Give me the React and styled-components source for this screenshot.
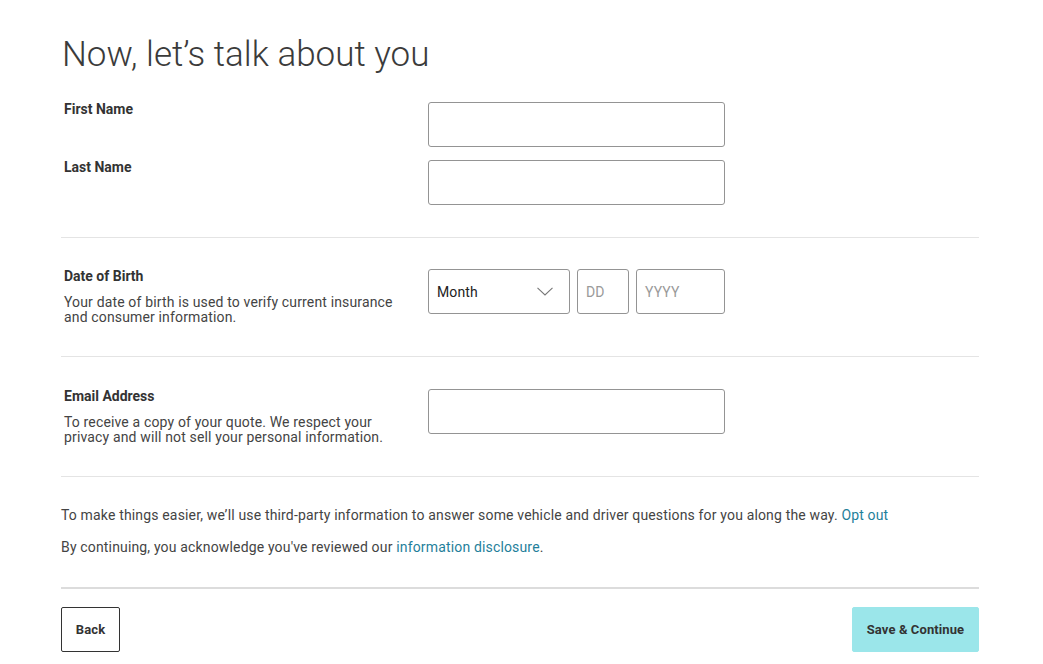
import React from 'react';
import styled, { createGlobalStyle } from 'styled-components';

const Global = createGlobalStyle`
  body {
    margin: 0;
    background: #fff;
    font-family: Roboto, "Liberation Sans", Arial, sans-serif;
    color: #333;
  }
`;

const Page = styled.div`
  width: 918px;
  margin-left: 61px;
  padding-top: 33px;
`;

const Title = styled.h1`
  margin: 0 0 25px 1px;
  font-weight: 300;
  font-size: 35px;
  line-height: 44px;
  color: #3b3b3b;
`;

const Section = styled.div`
  display: flex;
  flex-direction: column;
  gap: 13px;
  padding: ${(p) => p.$pad || '31px 0'};
  border-bottom: 1px solid #e4e4e4;
`;

const Row = styled.div`
  display: flex;
  align-items: flex-start;
`;

const LabelCol = styled.div`
  width: 364px;
  padding-left: 3px;
`;

const Label = styled.div`
  font-size: 14px;
  font-weight: 700;
  line-height: 14px;
  color: #333;
`;

const Help = styled.div`
  margin-top: 12px;
  font-size: 14px;
  line-height: 15px;
  letter-spacing: 0.15px;
  color: #444;
  max-width: 340px;
`;

const Field = styled.div`
  width: ${(p) => p.$w || 297}px;
  height: 45px;
  box-sizing: border-box;
  border: 1px solid #949494;
  border-radius: 3px;
  display: flex;
  align-items: center;
  padding: 0 8px;
  font-size: 14px;
  letter-spacing: 0.1px;
  color: ${(p) => (p.$placeholder ? '#9a9a9a' : '#222')};
  justify-content: space-between;
`;

const Inputs = styled.div`
  display: flex;
  gap: 7px;
`;

const Chevron = () => (
  <svg width="16" height="9" viewBox="0 0 16 9" style={{ marginRight: 8 }}>
    <path d="M0.5 0.8 L8 8 L15.5 0.8" fill="none" stroke="#777" strokeWidth="1.1" />
  </svg>
);

const Notes = styled.div`
  padding: 28px 0 30px;
  border-bottom: 2px solid #dcdcdc;
`;

const Note = styled.p`
  margin: 0 0 12px;
  font-size: 14px;
  line-height: 20px;
  letter-spacing: 0.16px;
  color: #444;
  &:last-child {
    margin-bottom: 0;
  }
`;

const Link = styled.a`
  color: #1f7f9b;
  text-decoration: none;
`;

const Actions = styled.div`
  display: flex;
  justify-content: space-between;
  padding-top: 18px;
`;

const Button = styled.button`
  height: 45px;
  padding: 0;
  border-radius: 2px;
  font-family: Roboto, "Liberation Sans", Arial, sans-serif;
  font-weight: 700;
  font-size: 13px;
  letter-spacing: 0.1px;
  color: #333;
  background: ${(p) => (p.$primary ? '#9be6ea' : '#fff')};
  border: ${(p) => (p.$primary ? '1px solid #9be6ea' : '1px solid #333')};
  width: ${(p) => (p.$primary ? '127px' : '59px')};
`;

export default function App() {
  return (
    <Page>
      <Global />
      <Title>Now, let’s talk about you</Title>
      <Section $pad="0 0 32px">
        <Row>
          <LabelCol>
            <Label>First Name</Label>
          </LabelCol>
          <Field />
        </Row>
        <Row>
          <LabelCol>
            <Label>Last Name</Label>
          </LabelCol>
          <Field />
        </Row>
      </Section>
      <Section>
        <Row>
          <LabelCol>
            <Label>Date of Birth</Label>
            <Help>Your date of birth is used to verify current insurance and consumer information.</Help>
          </LabelCol>
          <Inputs>
            <Field $w={142}>
              Month
              <Chevron />
            </Field>
            <Field $w={52} $placeholder>DD</Field>
            <Field $w={89} $placeholder>YYYY</Field>
          </Inputs>
        </Row>
      </Section>
      <Section $pad="32px 0 31px">
        <Row>
          <LabelCol>
            <Label>Email Address</Label>
            <Help>To receive a copy of your quote. We respect your privacy and will not sell your personal information.</Help>
          </LabelCol>
          <Field />
        </Row>
      </Section>
      <Notes>
        <Note>
          To make things easier, we’ll use third-party information to answer some vehicle and driver questions for you along the way. <Link href="#">Opt out</Link>
        </Note>
        <Note>
          By continuing, you acknowledge you've reviewed our <Link href="#">information disclosure</Link>.
        </Note>
      </Notes>
      <Actions>
        <Button>Back</Button>
        <Button $primary>Save &amp; Continue</Button>
      </Actions>
    </Page>
  );
}
